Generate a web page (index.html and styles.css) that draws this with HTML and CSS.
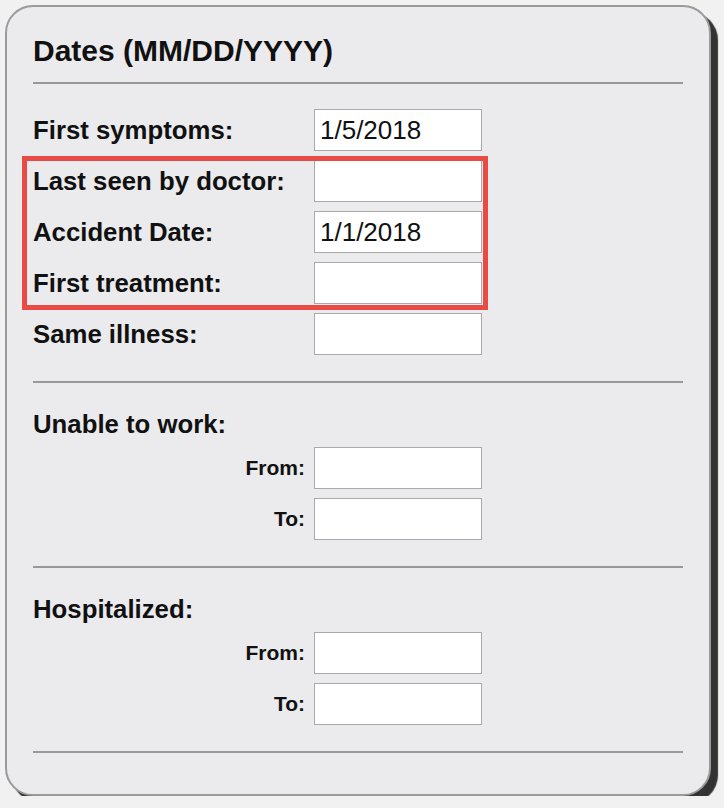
FILE: index.html
```html
<!DOCTYPE html>
<html>
<head>
<meta charset="utf-8">
<link rel="stylesheet" href="styles.css">
</head>
<body>
<div class="card">
  <h1 class="title">Dates (MM/DD/YYYY)</h1>
  <hr class="rule rule-top">
  <div class="rows">
    <div class="row"><span class="label">First symptoms:</span><input class="field" type="text" value="1/5/2018"></div>
    <div class="row"><span class="label">Last seen by doctor:</span><input class="field" type="text" value=""></div>
    <div class="row"><span class="label">Accident Date:</span><input class="field" type="text" value="1/1/2018"></div>
    <div class="row"><span class="label">First treatment:</span><input class="field" type="text" value=""></div>
    <div class="row"><span class="label">Same illness:</span><input class="field" type="text" value=""></div>
    <div class="highlight"></div>
  </div>
  <hr class="rule">
  <div class="section-title">Unable to work:</div>
  <div class="sub-rows">
    <div class="sub-row"><span class="sub-label">From:</span><input class="field" type="text" value=""></div>
    <div class="sub-row"><span class="sub-label">To:</span><input class="field" type="text" value=""></div>
  </div>
  <hr class="rule">
  <div class="section-title">Hospitalized:</div>
  <div class="sub-rows">
    <div class="sub-row"><span class="sub-label">From:</span><input class="field" type="text" value=""></div>
    <div class="sub-row"><span class="sub-label">To:</span><input class="field" type="text" value=""></div>
  </div>
  <hr class="rule rule-last">
</div>
</body>
</html>
```

FILE: styles.css
```css
html, body {
  margin: 0;
  padding: 0;
  background: #f1f1f1;
}
body {
  font-family: "Liberation Sans", Arial, sans-serif;
  color: #111;
}
.card {
  box-sizing: border-box;
  margin: 5px 0 0 5px;
  width: 706px;
  height: 791px;
  border: 2px solid #9a9a9a;
  border-radius: 28px;
  background: #ebebed;
  box-shadow: 7px 7px 1px #333;
  padding: 24px 26px 0 26px;
}
.title {
  margin: 0;
  font-size: 30px;
  line-height: 40px;
  font-weight: bold;
}
.rule {
  margin: 26px 0 0 0;
  border: 0;
  height: 2px;
  background: #999;
}
.rule-top {
  margin-top: 11px;
}
.rows {
  position: relative;
  margin-top: 25px;
  display: flex;
  flex-direction: column;
  gap: 9px;
}
.row {
  display: grid;
  grid-template-columns: 281px 168px;
  align-items: center;
}
.label {
  font-size: 25.75px;
  font-weight: bold;
}
.field {
  box-sizing: border-box;
  width: 168px;
  height: 42px;
  margin: 0;
  border: 1px solid #a9a9a9;
  background: #fff;
  padding: 0 0 0 5px;
  font-family: "Liberation Sans", Arial, sans-serif;
  font-size: 26px;
  color: #111;
  outline: none;
}
.highlight {
  position: absolute;
  left: -11px;
  top: 47px;
  width: 466px;
  height: 154px;
  box-sizing: border-box;
  border: 5px solid #e84a45;
  pointer-events: none;
}
.section-title {
  margin-top: 26px;
  font-size: 25.75px;
  line-height: 30px;
  font-weight: bold;
}
.sub-rows {
  margin-top: 8px;
  display: flex;
  flex-direction: column;
  gap: 9px;
}
.sub-row {
  display: grid;
  grid-template-columns: 272px 168px;
  column-gap: 9px;
  align-items: center;
}
.sub-label {
  text-align: right;
  font-size: 21px;
  font-weight: bold;
}
```
